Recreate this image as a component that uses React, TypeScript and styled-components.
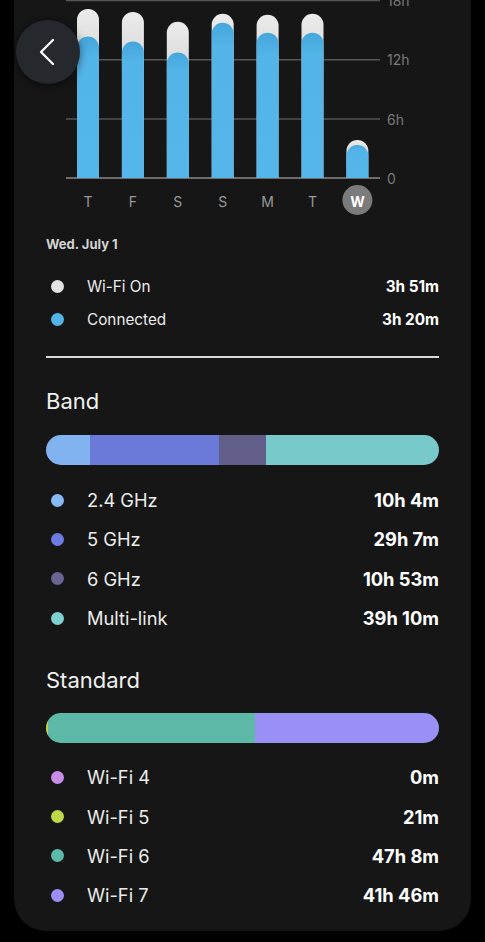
import styled, { createGlobalStyle } from 'styled-components'

const GlobalStyle = createGlobalStyle`
  html, body {
    margin: 0;
    padding: 0;
    background: #000;
  }
  body {
    font-family: Inter, "Noto Sans", Roboto, sans-serif;
    color: #f2f2f2;
    overflow: hidden;
  }
`

const Page = styled.div`
  position: relative;
  width: 485px;
  height: 942px;
  background: #000;
  overflow: hidden;
`

const Card = styled.div`
  display: flex;
  flex-direction: column;
  margin: 0 14px;
  padding: 0 32px 16px;
  background: #161616;
  border-radius: 0 0 32px 32px;
`

const ChartSvg = styled.svg`
  display: block;
  margin: 0 -32px;
  overflow: hidden;
`

const BackButton = styled.button`
  position: absolute;
  left: 16px;
  top: 20px;
  width: 64px;
  height: 64px;
  border: none;
  border-radius: 50%;
  background: #25292d;
  box-shadow: 0 2px 8px rgba(0, 0, 0, 0.5);
  display: flex;
  align-items: center;
  justify-content: center;
  padding: 0;
`

const DateLabel = styled.div`
  margin-top: 16px;
  font-size: 13px;
  line-height: 20px;
  font-weight: 700;
  color: #d4d4d4;
`

const List = styled.div<{ $gap: number }>`
  display: flex;
  flex-direction: column;
  margin-top: ${(p) => p.$gap}px;
`

const Row = styled.div<{ $h: number; $size: number }>`
  display: flex;
  align-items: center;
  height: ${(p) => p.$h}px;
  font-size: ${(p) => p.$size}px;
`

const Dot = styled.span<{ $color: string }>`
  width: 13px;
  height: 13px;
  border-radius: 50%;
  background: ${(p) => p.$color};
  margin-left: 5px;
  margin-right: 23px;
  flex-shrink: 0;
`

const Name = styled.span`
  flex: 1;
  color: #ececec;
`

const Value = styled.span`
  font-weight: 700;
  color: #fff;
`

const Divider = styled.div`
  margin-top: 20px;
  height: 1.5px;
  background: #d8d8d8;
`

const SectionTitle = styled.div<{ $gap: number }>`
  margin-top: ${(p) => p.$gap}px;
  font-size: 22px;
  line-height: 28px;
  color: #f0f0f0;
`

const StackBar = styled.div<{ $gap: number }>`
  display: flex;
  height: 30px;
  margin-top: ${(p) => p.$gap}px;
  border-radius: 15px;
  overflow: hidden;
`

const Segment = styled.div<{ $color: string }>`
  background: ${(p) => p.$color};
  height: 100%;
`

type Day = { label: string; on: number; conn: number; active?: boolean }

const days: Day[] = [
  { label: 'T', on: 17.1, conn: 14.3 },
  { label: 'F', on: 16.8, conn: 13.8 },
  { label: 'S', on: 15.8, conn: 12.7 },
  { label: 'S', on: 16.6, conn: 15.7 },
  { label: 'M', on: 16.5, conn: 14.7 },
  { label: 'T', on: 16.6, conn: 14.7 },
  { label: 'W', on: 3.85, conn: 3.33, active: true },
]

const BASE = 178
const PX_PER_H = 178 / 18
const BAR_W = 22

const topRounded = (cx: number, top: number) => {
  const r = BAR_W / 2
  const x0 = cx - r
  const x1 = cx + r
  return `M${x0} ${BASE} L${x0} ${top + r} A${r} ${r} 0 0 1 ${x1} ${top + r} L${x1} ${BASE} Z`
}

const Chart = () => (
  <ChartSvg width={457} height={218} viewBox="14 0 457 218">
    <defs>
      <linearGradient id="onGrad" x1="0" y1="0" x2="0" y2="1">
        <stop offset="0" stopColor="#ebebeb" />
        <stop offset="1" stopColor="#b0b0b0" />
      </linearGradient>
      <linearGradient id="connGrad" x1="0" y1="0" x2="0" y2="1">
        <stop offset="0" stopColor="#45a6dc" />
        <stop offset="0.15" stopColor="#53b4e8" />
        <stop offset="1" stopColor="#55b6e9" />
      </linearGradient>
    </defs>
    {[0, 59.3, 118.6].map((y) => (
      <line key={y} x1={66} x2={380} y1={y + 0.5} y2={y + 0.5} stroke="#555" strokeWidth={1.5} />
    ))}
    <line x1={66} x2={380} y1={BASE} y2={BASE} stroke="#8a8a8a" strokeWidth={1.5} />
    {[
      ['18h', 0.5],
      ['12h', 59.8],
      ['6h', 119],
      ['0', 178],
    ].map(([t, y]) => (
      <text
        key={t as string}
        x={387}
        y={y as number}
        dominantBaseline="central"
        fontSize={14}
        fill="#7a7a7a"
        fontFamily="Inter, Roboto, sans-serif"
      >
        {t}
      </text>
    ))}
    {days.map((d, i) => {
      const cx = 88 + i * 44.9
      const onTop = BASE - d.on * PX_PER_H
      const connTop = BASE - d.conn * PX_PER_H
      return (
        <g key={i}>
          <path d={topRounded(cx, onTop)} fill="url(#onGrad)" />
          <path d={topRounded(cx, connTop)} fill="url(#connGrad)" />
          {d.active && <circle cx={cx} cy={200} r={15} fill="#7b7b7b" />}
          <text
            x={cx}
            y={201}
            textAnchor="middle"
            dominantBaseline="central"
            fontSize={14}
            fontWeight={d.active ? 700 : 400}
            fill={d.active ? '#fff' : '#9a9a9a'}
            fontFamily="Inter, Roboto, sans-serif"
          >
            {d.label}
          </text>
        </g>
      )
    })}
  </ChartSvg>
)

type Item = { name: string; value: string; color: string; minutes: number; barColor: string }

const band: Item[] = [
  { name: '2.4 GHz', value: '10h 4m', color: '#86b9f5', minutes: 604, barColor: '#80b3f0' },
  { name: '5 GHz', value: '29h 7m', color: '#6d7be2', minutes: 1747, barColor: '#6b79d8' },
  { name: '6 GHz', value: '10h 53m', color: '#6a6494', minutes: 653, barColor: '#625e8a' },
  { name: 'Multi-link', value: '39h 10m', color: '#7fd0d0', minutes: 2350, barColor: '#78c9c9' },
]

const standard: Item[] = [
  { name: 'Wi-Fi 4', value: '0m', color: '#c78de8', minutes: 0, barColor: '#c78de8' },
  { name: 'Wi-Fi 5', value: '21m', color: '#bcd94a', minutes: 21, barColor: '#bcd94a' },
  { name: 'Wi-Fi 6', value: '47h 8m', color: '#5cbaa8', minutes: 2828, barColor: '#5eb8a8' },
  { name: 'Wi-Fi 7', value: '41h 46m', color: '#9b8ff5', minutes: 2506, barColor: '#9a8ff4' },
]

const Section = ({
  title,
  items,
  titleGap,
  barGap,
  listGap,
}: {
  title: string
  items: Item[]
  titleGap: number
  barGap: number
  listGap: number
}) => {
  const total = items.reduce((s, it) => s + it.minutes, 0)
  return (
    <>
      <SectionTitle $gap={titleGap}>{title}</SectionTitle>
      <StackBar $gap={barGap}>
        {items.map((it) =>
          it.minutes > 0 ? (
            <Segment key={it.name} $color={it.barColor} style={{ width: `${(it.minutes / total) * 100}%` }} />
          ) : null,
        )}
      </StackBar>
      <List $gap={listGap}>
        {items.map((it) => (
          <Row key={it.name} $h={39.3} $size={18.3}>
            <Dot $color={it.color} />
            <Name>{it.name}</Name>
            <Value>{it.value}</Value>
          </Row>
        ))}
      </List>
    </>
  )
}

export default function App() {
  return (
    <Page>
      <GlobalStyle />
      <Card>
        <Chart />
        <DateLabel>Wed. July 1</DateLabel>
        <List $gap={16}>
          <Row $h={33} $size={15.3}>
            <Dot $color="#e2e2e2" />
            <Name>Wi-Fi On</Name>
            <Value>3h 51m</Value>
          </Row>
          <Row $h={33} $size={15.3}>
            <Dot $color="#52b4e8" />
            <Name>Connected</Name>
            <Value>3h 20m</Value>
          </Row>
        </List>
        <Divider />
        <Section title="Band" items={band} titleGap={29} barGap={20} listGap={16} />
        <Section title="Standard" items={standard} titleGap={28} barGap={19} listGap={15} />
      </Card>
      <BackButton aria-label="Back">
        <svg width="24" height="28" viewBox="0 0 24 28">
          <path d="M17 2 L5 14 L17 26" fill="none" stroke="#fff" strokeWidth={2.2} strokeLinecap="round" strokeLinejoin="round" />
        </svg>
      </BackButton>
    </Page>
  )
}
